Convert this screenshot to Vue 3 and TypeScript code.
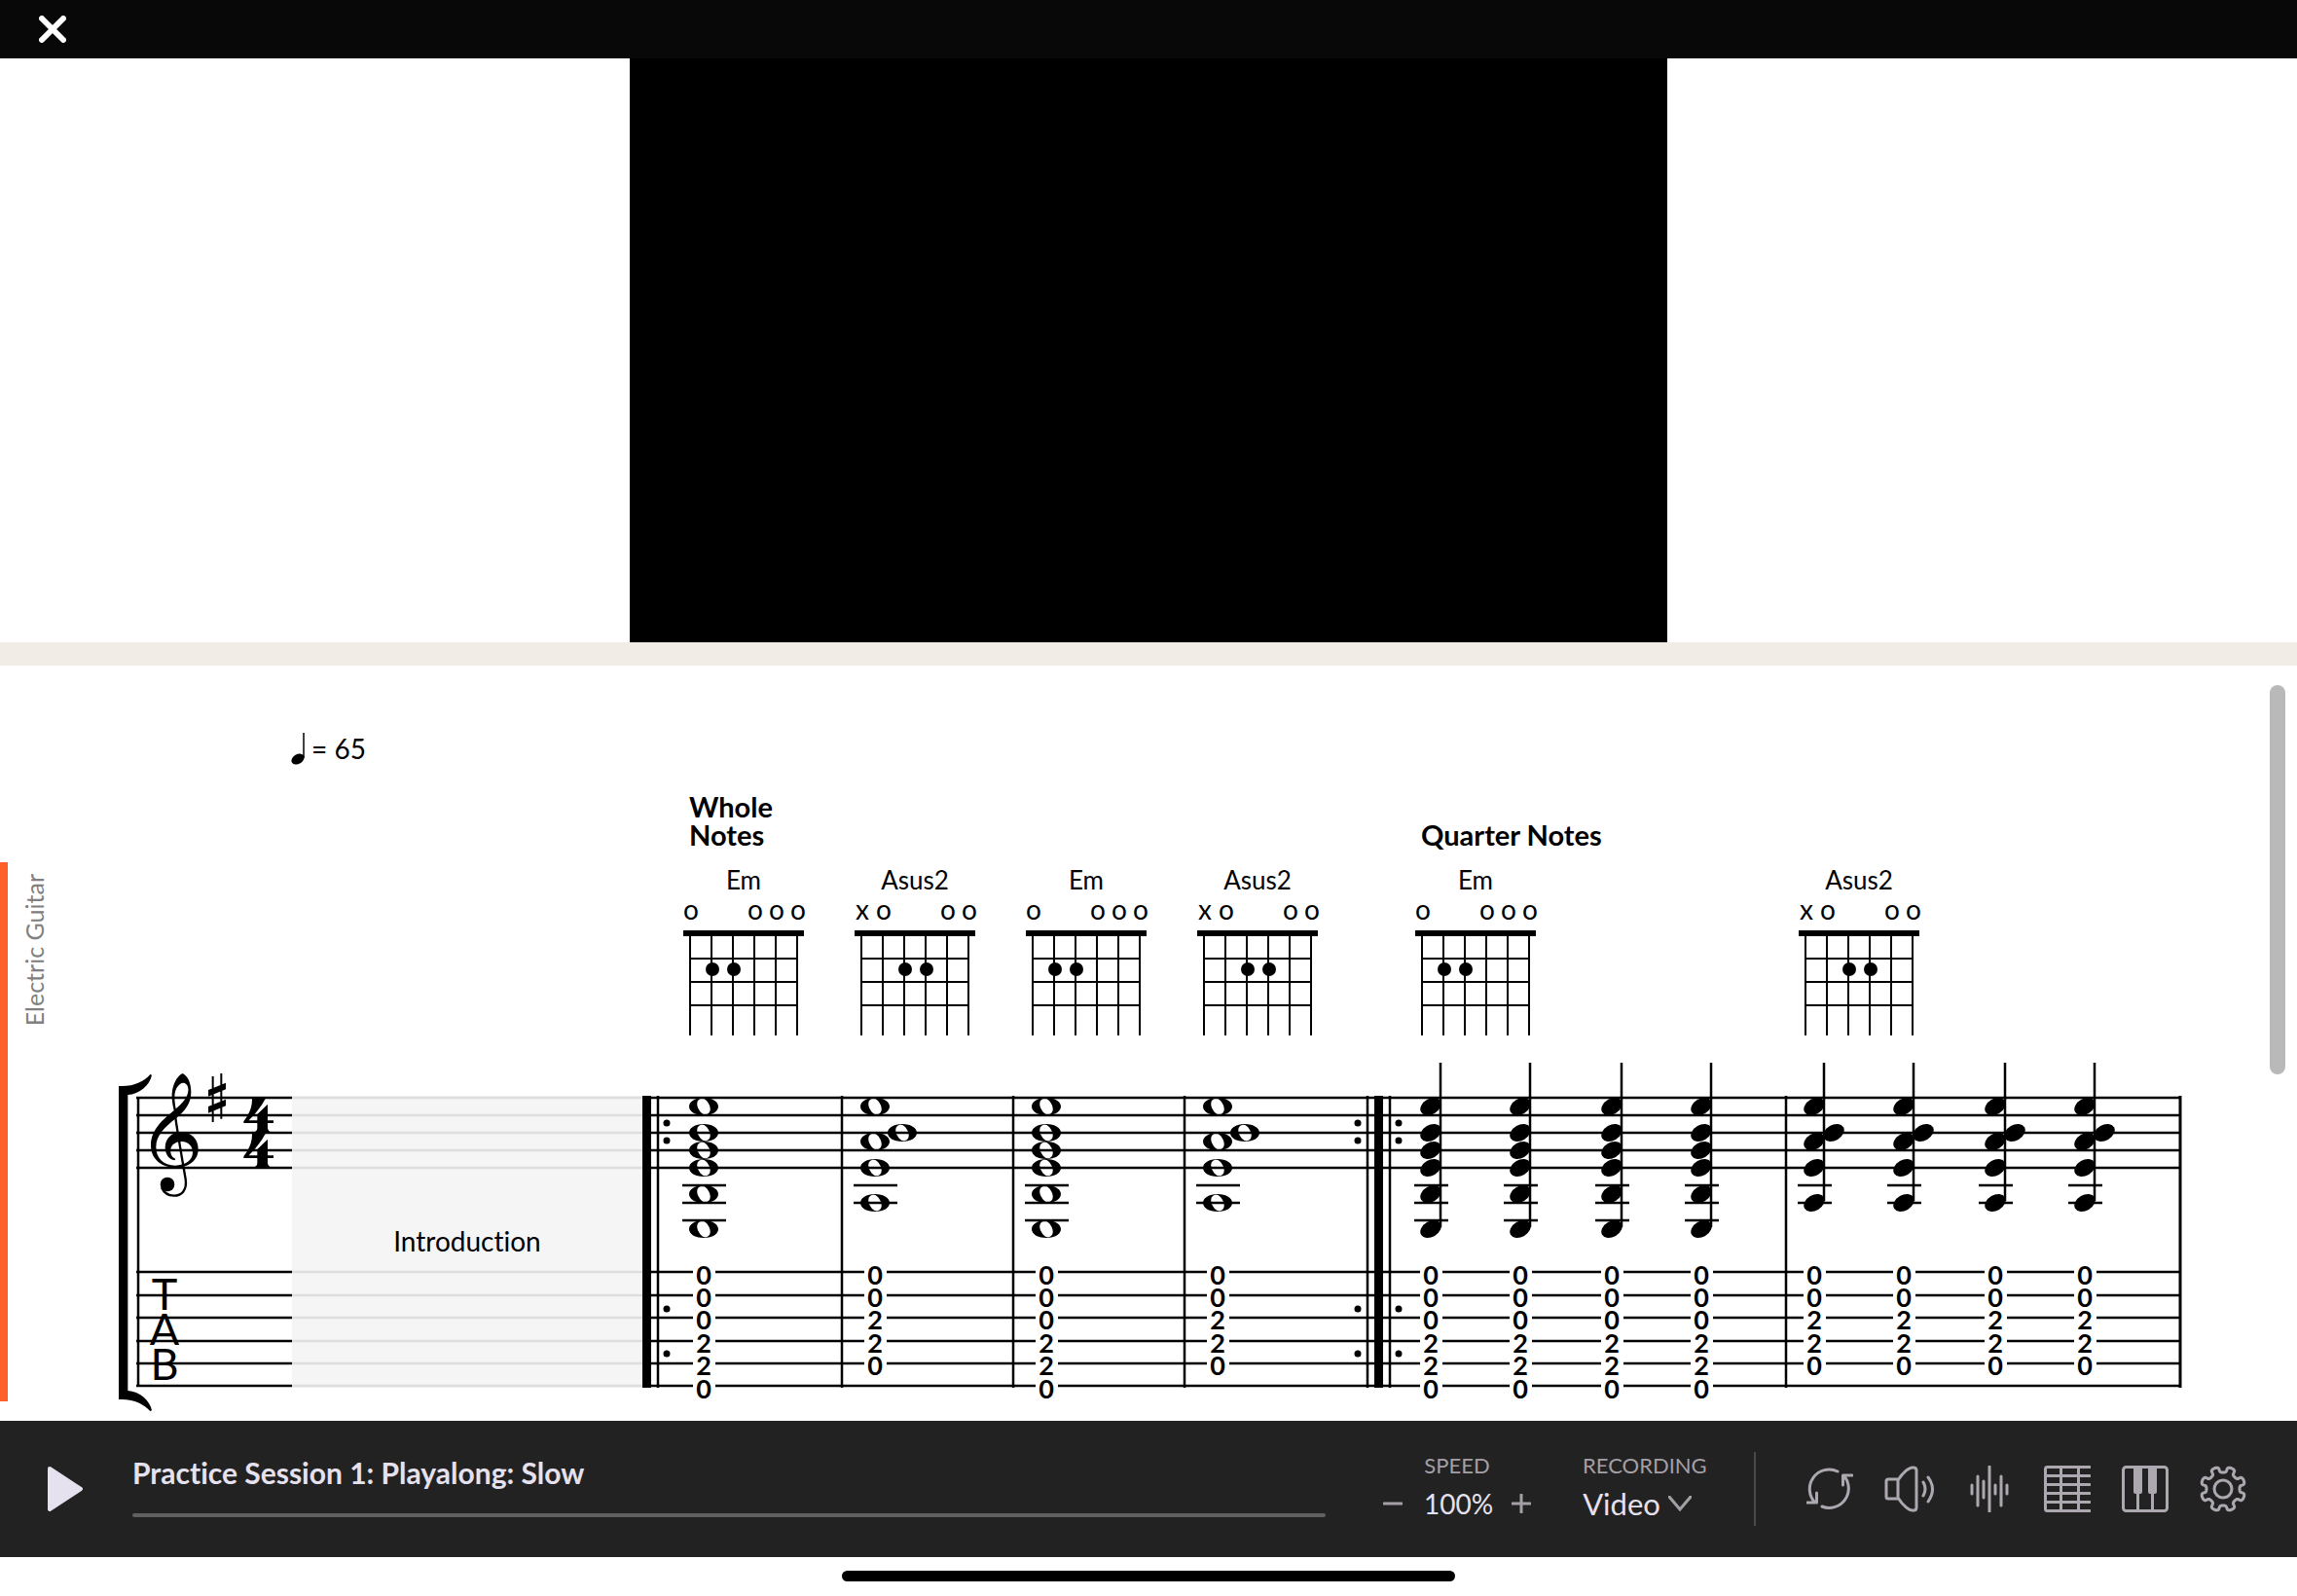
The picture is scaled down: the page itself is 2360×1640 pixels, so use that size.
<script setup lang="ts">
import { ref } from 'vue'

type Mark = 'x' | 'o' | ''
interface Chord {
  name: string
  marks: Mark[]
  dots: number[]
  heads: number[]
  shifted: number[]
  ledgers: number[]
  frets: number[]
  stemEnd: number
}
interface Measure {
  id: number
  chord: Chord
  heading?: string
  whole: boolean
  startRepeat: boolean
  endRepeat: boolean
  last: boolean
  notes: number[]
}

const em: Chord = {
  name: 'Em',
  marks: ['o', '', '', 'o', 'o', 'o'],
  dots: [1, 2],
  heads: [57, 84, 102, 120, 147, 183],
  shifted: [],
  ledgers: [138, 156, 174],
  frets: [0, 0, 0, 2, 2, 0],
  stemEnd: 181,
}
const asus2: Chord = {
  name: 'Asus2',
  marks: ['x', 'o', '', '', 'o', 'o'],
  dots: [2, 3],
  heads: [57, 93, 120, 156],
  shifted: [84],
  ledgers: [138, 156],
  frets: [0, 0, 2, 2, 0],
  stemEnd: 154,
}

const measures: Measure[] = [
  { id: 1, chord: em, heading: 'Whole Notes', whole: true, startRepeat: true, endRepeat: false, last: false, notes: [63] },
  { id: 2, chord: asus2, whole: true, startRepeat: false, endRepeat: false, last: false, notes: [35] },
  { id: 3, chord: em, whole: true, startRepeat: false, endRepeat: false, last: false, notes: [35] },
  { id: 4, chord: asus2, whole: true, startRepeat: false, endRepeat: true, last: false, notes: [35] },
  { id: 5, chord: em, heading: 'Quarter Notes', whole: false, startRepeat: true, endRepeat: false, last: false, notes: [58, 150, 244, 336] },
  { id: 6, chord: asus2, whole: false, startRepeat: false, endRepeat: false, last: true, notes: [30, 122, 216, 308] },
]

const staffLines = [48, 66, 84, 102, 120]
const tabLines = [227, 251, 274, 298, 321, 344]
const fretBaselines = [240, 263, 286, 310, 333, 357]
const strings = [0, 1, 2, 3, 4, 5]

const speed = ref(100)
const recording = ref('Video')
const position = ref(0)

function gearPath(): string {
  const points: string[] = []
  for (let i = 0; i < 160; i++) {
    const a = (i / 160) * Math.PI * 2
    const c = Math.cos(8 * a + Math.PI)
    const r = 20 + 3 * Math.sign(c) * Math.pow(Math.abs(c), 0.7)
    const t = a + 0.05 * Math.sin(16 * a)
    points.push(`${(24 + r * Math.sin(t)).toFixed(2)} ${(24 - r * Math.cos(t)).toFixed(2)}`)
  }
  return `M${points.join('L')}Z`
}
const gear = gearPath()
const four =
  'M447 100L488 102C475 128 455 150 437 169H463V150L495 119V169H513V177H495V190C495 200 500 202 506 207H452C460 202 463 200 463 190V177H421V172C438 150 448 128 447 100Z'
const horn = 'M36 63C80 66 115 48 133 27L138 29C132 60 100 88 64 90H36Z'
const wholeHead =
  'M0 -9C9 -9 15 -5 15 0S9 9 0 9S-15 5 -15 0S-9 -9 0 -9ZM-3 -8C-7 -7 -8 -2 -5 3C-3 7 0 9 3 8C7 7 8 2 5 -3C3 -7 0 -9 -3 -8Z'
</script>

<template>
  <div class="app">
    <header class="topbar">
      <button class="close" type="button" aria-label="Close">
        <svg width="28" height="28" viewBox="0 0 28 28"><path d="M3 3L25 25M25 3L3 25" /></svg>
      </button>
    </header>

    <section class="stage"><video class="video"></video></section>

    <main class="score">
      <div class="tempo">
        <svg width="16" height="34" viewBox="0 0 16 34">
          <ellipse cx="6" cy="28" rx="7" ry="5" transform="rotate(-30 6 28)" />
          <path d="M12 1V27" stroke="#000" stroke-width="1.5" />
        </svg>
        <span>= 65</span>
      </div>

      <div class="system headings">
        <h2 v-for="m in measures" :key="m.id" :class="['heading', `col-${m.id}`]">{{ m.heading }}</h2>
      </div>

      <div class="track">
        <div class="track-name"><span>Electric Guitar</span></div>
        <div class="system">
          <div class="cell clef">
            <svg class="staff" width="100%" height="360" role="img" aria-label="Treble clef, G major, 4/4">
              <line v-for="y in staffLines" :key="y" x1="0" x2="100%" :y1="y" :y2="y" />
              <line v-for="y in tabLines" :key="y" x1="0" x2="100%" :y1="y" :y2="y" />
              <line x1="2" x2="2" y1="47" y2="345" />
              <g transform="translate(-30 15) scale(.333333)">
                <path d="M36 80H64V1010H36Z" />
                <path :d="horn" />
                <path :d="horn" transform="translate(0 1092) scale(1 -1)" />
                <path
                  fill-rule="evenodd"
                  d="M233 24C215 32 198 62 200 100C201 118 204 128 206 138C175 165 135 195 135 245C135 290 170 314 212 314C255 314 281 290 281 258C281 225 258 205 228 205C200 205 179 225 179 252C179 274 192 290 208 292C212 290 211 287 207 285C200 282 194 270 196 258C198 243 212 234 230 234C252 234 264 250 264 268C264 292 240 308 210 308C175 308 151 285 151 252C151 215 178 190 212 163C240 140 259 118 259 82C259 55 250 32 233 24ZM239 54C250 58 254 73 247 91C241 107 228 120 212 133C208 110 205 87 214 70C221 58 230 52 239 54Z"
                />
                <path d="M209 145C214 190 232 290 242 350C247 384 230 401 206 401C190 401 176 394 168 376" fill="none" stroke="#000" stroke-width="7" />
                <circle cx="186" cy="366" r="22" />
                <path d="M323 33H329V174H323ZM349 24H355V164H349ZM312 75L366 53V73L312 95ZM312 126L366 104V124L312 146Z" />
                <path :d="four" />
                <path :d="four" transform="translate(0 108)" />
              </g>
              <g class="tab-letters">
                <text x="29" y="266">T</text>
                <text x="29" y="302">A</text>
                <text x="29" y="338">B</text>
              </g>
            </svg>
          </div>

          <div class="cell intro">
            <svg class="staff faded" width="100%" height="360" aria-hidden="true">
              <rect x="0" y="46" width="100%" height="300" />
              <line v-for="y in staffLines" :key="y" x1="0" x2="100%" :y1="y" :y2="y" />
              <line v-for="y in tabLines" :key="y" x1="0" x2="100%" :y1="y" :y2="y" />
            </svg>
            <span class="intro-label">Introduction</span>
          </div>

          <div v-for="m in measures" :key="m.id" :class="['cell', 'measure', { repeat: m.startRepeat }]">
            <figure class="chord">
              <figcaption>{{ m.chord.name }}</figcaption>
              <svg width="124" height="144" viewBox="0 0 124 144" aria-hidden="true">
                <g class="marks">
                  <template v-for="(mark, s) in m.chord.marks" :key="s">
                    <text v-if="mark" :x="8 + s * 22" y="25">{{ mark }}</text>
                  </template>
                </g>
                <rect x="0" y="36" width="124" height="6" />
                <rect v-for="s in strings" :key="s" :x="6 + s * 22" y="42" width="2" height="102" />
                <rect v-for="f in 3" :key="f" x="6" :y="40 + f * 24" width="112" height="2" />
                <circle v-for="d in m.chord.dots" :key="d" :cx="8 + d * 22" cy="76" r="7" />
              </svg>
            </figure>

            <svg class="staff" width="100%" height="360" role="img" :aria-label="`${m.chord.name} measure`">
              <line v-for="y in staffLines" :key="y" x1="0" x2="100%" :y1="y" :y2="y" />
              <line v-for="y in tabLines" :key="y" x1="0" x2="100%" :y1="y" :y2="y" />

              <g v-if="m.startRepeat">
                <rect x="0" y="46" width="9" height="300" />
                <line x1="16" x2="16" y1="46" y2="346" />
                <circle v-for="y in [74, 92, 265, 311]" :key="y" cx="25" :cy="y" r="3.5" />
              </g>
              <line v-else x1="1" x2="1" y1="46" y2="346" />
              <svg v-if="m.endRepeat" x="100%" overflow="visible">
                <line x1="-7" x2="-7" y1="46" y2="346" />
                <circle v-for="y in [74, 92, 265, 311]" :key="y" cx="-17" :cy="y" r="3.5" />
              </svg>
              <svg v-if="m.last" x="100%" overflow="visible">
                <line x1="-1" x2="-1" y1="46" y2="346" class="final" />
              </svg>

              <g v-for="(x, i) in m.notes" :key="i" :transform="`translate(${x} 0)`">
                <g v-if="m.whole">
                  <line v-for="y in m.chord.ledgers" :key="y" x1="-22" x2="23" :y1="y" :y2="y" />
                  <path v-for="y in m.chord.heads" :key="y" :transform="`translate(0 ${y})`" fill-rule="evenodd" :d="wholeHead" />
                  <path v-for="y in m.chord.shifted" :key="y" :transform="`translate(28 ${y})`" fill-rule="evenodd" :d="wholeHead" />
                </g>
                <g v-else>
                  <line v-for="y in m.chord.ledgers" :key="y" x1="-17" x2="18" :y1="y" :y2="y" />
                  <line x1="10" x2="10" y1="12" :y2="m.chord.stemEnd" />
                  <ellipse v-for="y in m.chord.heads" :key="y" rx="11.5" ry="8" :transform="`translate(0 ${y}) rotate(-30)`" />
                  <ellipse v-for="y in m.chord.shifted" :key="y" rx="11.5" ry="8" :transform="`translate(20 ${y}) rotate(-30)`" />
                </g>
                <g class="frets">
                  <template v-for="(f, s) in m.chord.frets" :key="s">
                    <rect x="-11" :y="fretBaselines[s] - 20" width="23" height="22" />
                    <text x="0" :y="fretBaselines[s]">{{ f }}</text>
                  </template>
                </g>
              </g>
            </svg>
          </div>
        </div>
      </div>
      <div class="scrollbar"></div>
    </main>

    <footer class="player">
      <button class="play" type="button" aria-label="Play">
        <svg width="36" height="46" viewBox="0 0 36 46"><path d="M2 2L34 23L2 44Z" /></svg>
      </button>
      <div class="now">
        <label class="title" for="seek">Practice Session 1: Playalong: Slow</label>
        <input id="seek" v-model="position" class="seek" type="range" min="0" max="100" />
      </div>
      <div class="speed">
        <span class="caption">SPEED</span>
        <button class="step" type="button" aria-label="Slower" @click="speed -= 5">
          <svg width="20" height="20" viewBox="0 0 20 20"><path d="M1 10H19" /></svg>
        </button>
        <output class="value">{{ speed }}%</output>
        <button class="step" type="button" aria-label="Faster" @click="speed += 5">
          <svg width="20" height="20" viewBox="0 0 20 20"><path d="M1 10H19M10 1V19" /></svg>
        </button>
      </div>
      <div class="recording">
        <label class="caption" for="recording">RECORDING</label>
        <div class="picker">
          <select id="recording" v-model="recording" class="value">
            <option>Video</option>
          </select>
          <svg width="24" height="16" viewBox="0 0 24 16"><path d="M1 1L12 14L23 1" /></svg>
        </div>
      </div>
      <nav class="tools">
        <button type="button" aria-label="Loop">
          <svg width="48" height="48" viewBox="0 0 48 48">
            <path d="M32 6A20 20 0 0 0 9 38M39 11A20 20 0 0 1 16 42M47 10H37.500V20M1 38H10.500V28" />
          </svg>
        </button>
        <button type="button" aria-label="Volume">
          <svg width="52" height="48" viewBox="0 0 52 48">
            <path d="M14 14H4Q2 14 2 16V32Q2 34 4 34H14ZM14 15C19 7 26 1 30 2Q33 2 33 5V43Q33 46 30 46C26 47 19 41 14 33M40 17Q44 24 40 31M45 12Q54 24 45 37" />
          </svg>
        </button>
        <button type="button" aria-label="Waveform">
          <svg width="48" height="48" viewBox="0 0 48 48">
            <path d="M6 20V29M12 11V41M18 16V33M24 1V47M30 20V29M36 11V41M42 20V29" />
          </svg>
        </button>
        <button type="button" aria-label="Fretboard">
          <svg width="48" height="48" viewBox="0 0 48 48">
            <path d="M47 1.500H3.500Q1.500 1.500 1.500 3.500V44.500Q1.500 46.500 3.500 46.500H47M1.500 10.500H47M1.500 19.500H47M1.500 28.500H47M1.500 37.500H47M17.500 2V46M35.500 2V46" />
          </svg>
        </button>
        <button type="button" aria-label="Keyboard">
          <svg width="48" height="48" viewBox="0 0 48 48">
            <rect x="1.5" y="1.5" width="45" height="45" rx="3" />
            <path d="M16.500 28V46M31.500 28V46" />
            <path class="solid" d="M12 2H21V27Q21 29 19 29H14Q12 29 12 27ZM27 2H36V27Q36 29 34 29H29Q27 29 27 27Z" />
          </svg>
        </button>
        <button type="button" aria-label="Settings">
          <svg width="48" height="48" viewBox="0 0 48 48">
            <path :d="gear" />
            <circle cx="24" cy="24" r="9" />
          </svg>
        </button>
      </nav>
    </footer>
    <div class="home"></div>
  </div>
</template>

<style>
body {
  background: #fff;
}
</style>

<style scoped>
.app {
  display: flex;
  flex-direction: column;
  min-height: 100vh;
  background: #fff;
  color: #000;
  font-family: Lato, "Open Sans", sans-serif;
  font-variant-ligatures: none;
}
button {
  display: block;
  margin: 0;
  padding: 0;
  border: 0;
  background: none;
}
svg {
  display: block;
}
.topbar {
  display: flex;
  align-items: center;
  height: 60px;
  padding: 0 40px;
  background: #080808;
}
.close path {
  stroke: #fff;
  stroke-width: 6;
  stroke-linecap: round;
}
.stage {
  display: flex;
  justify-content: center;
  border-bottom: 24px solid #f1ede6;
}
.video {
  height: 600px;
  aspect-ratio: 16 / 9;
  background: #000;
}
.score {
  position: relative;
  padding-bottom: 20px;
}
.tempo {
  display: flex;
  align-items: center;
  gap: 4px;
  height: 34px;
  padding: 68px 0 0 300px;
  font-size: 28px;
}
.tempo svg {
  overflow: visible;
}
.system {
  display: grid;
  flex: 1;
  grid-template-columns: 160fr 360fr 204fr 176fr 176fr 196fr 422fr 407fr;
  margin-right: 119px;
}
.headings {
  align-items: end;
  height: 86px;
  margin-left: 140px;
}
.heading {
  margin: 0;
  font-size: 29px;
  line-height: 29px;
  font-weight: 700;
}
.col-1 {
  grid-column: 3;
  padding: 0 60px 0 48px;
}
.col-5 {
  padding-left: 48px;
}
.track {
  display: flex;
  height: 554px;
  margin-top: 14px;
  border-left: 8px solid #ff602b;
}
.track-name {
  display: flex;
  justify-content: center;
  align-items: flex-start;
  width: 132px;
  box-sizing: border-box;
  padding: 12px 78px 0 0;
  color: #808080;
  font-size: 25px;
  line-height: 28px;
}
.track-name span {
  writing-mode: vertical-rl;
  transform: rotate(180deg);
}
.cell {
  display: flex;
  flex-direction: column;
  justify-content: flex-end;
  min-width: 0;
}
.staff,
.chord svg {
  overflow: visible;
}
.staff line {
  stroke: #000;
  stroke-width: 2.5;
}
.staff .final {
  stroke-width: 3;
}
.staff.faded line {
  stroke: #dedede;
}
.faded rect {
  fill: #f5f5f5;
}
.intro {
  position: relative;
}
.intro-label {
  position: absolute;
  right: 0;
  bottom: 147px;
  left: 0;
  font-size: 28px;
  line-height: 36px;
  text-align: center;
}
.tab-letters {
  font-size: 45px;
  text-anchor: middle;
}
.chord {
  width: 124px;
  margin: 0 0 16px 14px;
}
.repeat .chord {
  margin-left: 42px;
}
.chord figcaption {
  font-size: 26px;
  line-height: 32px;
  text-align: center;
}
.marks {
  font-size: 28px;
  text-anchor: middle;
}
.frets {
  font-size: 27px;
  font-weight: 700;
  text-anchor: middle;
}
.frets rect {
  fill: #fff;
}
.scrollbar {
  position: absolute;
  top: 20px;
  right: 12px;
  width: 16px;
  height: 400px;
  border-radius: 8px;
  background: #b9b9b9;
}
.player {
  display: flex;
  align-items: center;
  height: 140px;
  padding: 0 52px 0 49px;
  background: #222;
}
.play path {
  fill: #e6e1ee;
  stroke: #e6e1ee;
  stroke-width: 4;
  stroke-linejoin: round;
}
.now {
  display: flex;
  flex: 1;
  flex-direction: column;
  gap: 24px;
  margin: 0 0 6px 51px;
}
.title {
  color: #e6e1ee;
  font-size: 30px;
  line-height: 36px;
  font-weight: 700;
}
.seek {
  appearance: none;
  width: 100%;
  height: 4px;
  margin: 0;
  border-radius: 2px;
  background: #606061;
}
.seek::-webkit-slider-thumb {
  appearance: none;
  width: 0;
  height: 0;
}
.speed {
  display: grid;
  grid-template-columns: 20px 68px 20px;
  column-gap: 22px;
  align-items: center;
  margin: 0 0 6px 59px;
}
.speed .caption {
  grid-column: 1 / -1;
  text-align: center;
}
.caption {
  display: block;
  color: #a49fa5;
  font-size: 22px;
  line-height: 36px;
}
.value {
  color: #e6e1ee;
  font-family: inherit;
  font-size: 28px;
  line-height: 42px;
  text-align: center;
}
.step path,
.picker path {
  fill: none;
  stroke: #a49fa5;
  stroke-width: 3;
  stroke-linecap: round;
}
.recording {
  width: 128px;
  margin: 0 0 6px 53px;
}
.picker {
  display: flex;
  align-items: center;
  gap: 8px;
}
.picker select {
  appearance: none;
  height: 42px;
  margin: 0;
  padding: 0;
  border: 0;
  background: none;
  font-size: 31px;
}
.tools {
  display: flex;
  gap: 32px;
  margin-left: 48px;
  padding: 14px 0 14px 52px;
  border-left: 2px solid #4a4a4a;
}
.tools svg {
  fill: none;
  stroke: #ada8b0;
  stroke-width: 3;
  stroke-linecap: round;
  stroke-linejoin: round;
}
.tools .solid {
  fill: #ada8b0;
  stroke: none;
}
.home {
  align-self: center;
  width: 630px;
  height: 11px;
  margin: 14px 0;
  border-radius: 6px;
  background: #000;
}
</style>
